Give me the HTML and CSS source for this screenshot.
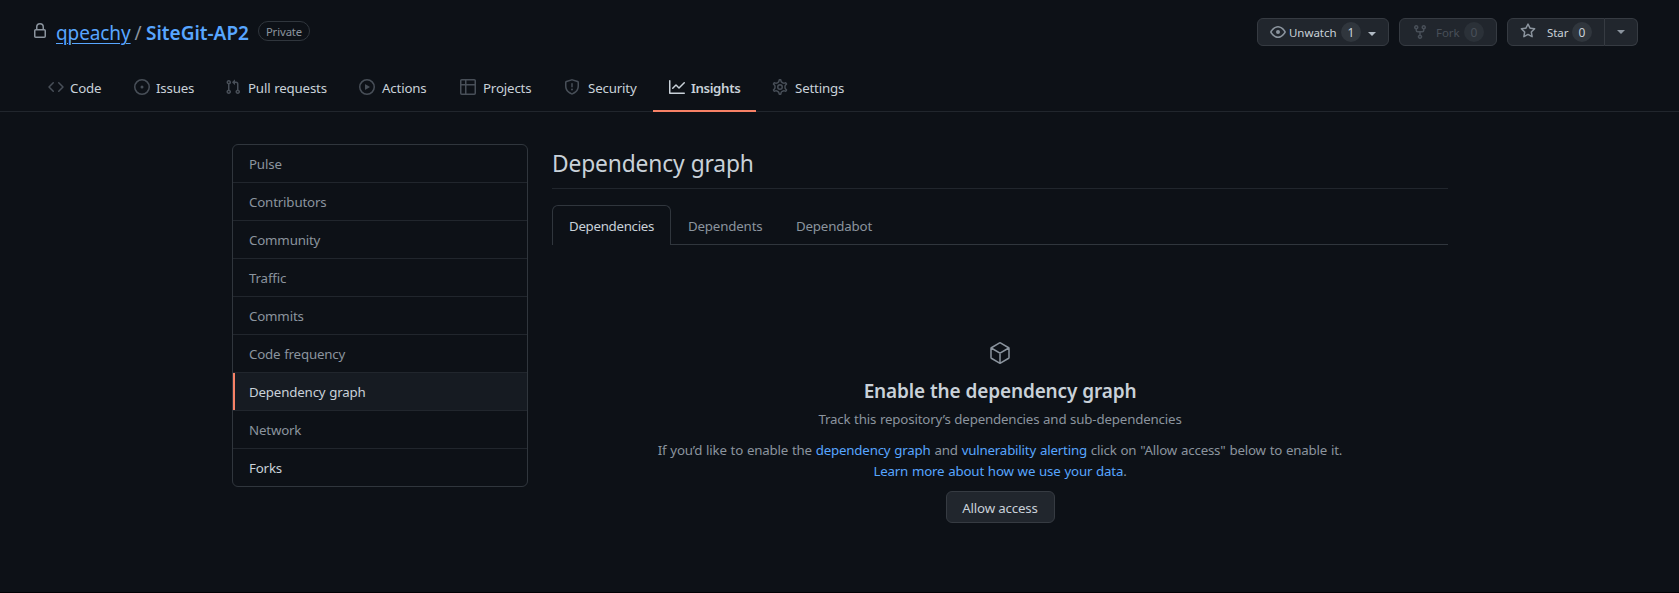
FILE: index.html
```html
<!DOCTYPE html>
<html lang="en">
<head>
<meta charset="utf-8">
<title>Dependency graph · qpeachy/SiteGit-AP2</title>
<link rel="stylesheet" href="styles.css">
</head>
<body>
<header class="repo-head">
  <div class="title-row">
    <svg class="icon lock" viewBox="0 0 16 16"><path fill-rule="evenodd" d="M4 4v2h-.25A1.75 1.75 0 002 7.75v5.5c0 .966.784 1.75 1.75 1.75h8.5A1.75 1.75 0 0014 13.25v-5.5A1.75 1.75 0 0012.25 6H12V4a4 4 0 10-8 0zm6.5 2V4a2.5 2.5 0 10-5 0v2h5zM12 7.5h.25a.25.25 0 01.25.25v5.5a.25.25 0 01-.25.25h-8.5a.25.25 0 01-.25-.25v-5.5a.25.25 0 01.25-.25H12z"/></svg>
    <h1 class="repo-name"><a class="owner" href="#">qpeachy</a><span class="slash">/</span><a class="repo" href="#">SiteGit-AP2</a></h1>
    <span class="label">Private</span>
    <div class="actions">
      <button class="btn-sm watch">
        <svg class="icon" viewBox="0 0 16 16"><path fill-rule="evenodd" d="M1.679 7.932c.412-.621 1.242-1.75 2.366-2.717C5.175 4.242 6.527 3.5 8 3.5c1.473 0 2.824.742 3.955 1.715 1.124.967 1.954 2.096 2.366 2.717a.119.119 0 010 .136c-.412.621-1.242 1.75-2.366 2.717C10.825 11.758 9.473 12.5 8 12.5c-1.473 0-2.824-.742-3.955-1.715C2.92 9.818 2.09 8.69 1.679 8.068a.119.119 0 010-.136zM8 2c-1.981 0-3.67.992-4.933 2.078C1.797 5.169.88 6.423.43 7.1a1.619 1.619 0 000 1.798c.45.678 1.367 1.932 2.637 3.024C4.329 13.008 6.019 14 8 14c1.981 0 3.67-.992 4.933-2.078 1.27-1.091 2.187-2.345 2.637-3.023a1.619 1.619 0 000-1.798c-.45-.678-1.367-1.932-2.637-3.023C11.671 2.992 9.981 2 8 2zm0 8a2 2 0 100-4 2 2 0 000 4z"/></svg>
        <span class="btn-text">Unwatch</span><span class="count">1</span><span class="caret"></span>
      </button>
      <button class="btn-sm fork" disabled>
        <svg class="icon" viewBox="0 0 16 16"><path fill-rule="evenodd" d="M5 3.25a.75.75 0 11-1.5 0 .75.75 0 011.5 0zm0 2.122a2.25 2.25 0 10-1.5 0v.878A2.25 2.25 0 005.75 8.5h1.5v2.128a2.251 2.251 0 101.5 0V8.5h1.5a2.25 2.25 0 002.25-2.25v-.878a2.25 2.25 0 10-1.5 0v.878a.75.75 0 01-.75.75h-4.5A.75.75 0 015 6.25v-.878zm3.75 7.378a.75.75 0 11-1.5 0 .75.75 0 011.5 0zm3-8.75a.75.75 0 100-1.5.75.75 0 000 1.5z"/></svg>
        <span class="btn-text">Fork</span><span class="count">0</span>
      </button>
      <div class="btn-group">
        <button class="btn-sm star">
          <svg class="icon" viewBox="0 0 16 16"><path fill-rule="evenodd" d="M8 .25a.75.75 0 01.673.418l1.882 3.815 4.21.612a.75.75 0 01.416 1.279l-3.046 2.97.719 4.192a.75.75 0 01-1.088.791L8 12.347l-3.766 1.98a.75.75 0 01-1.088-.79l.72-4.194L.818 6.374a.75.75 0 01.416-1.28l4.21-.611L7.327.668A.75.75 0 018 .25zm0 2.445L6.615 5.5a.75.75 0 01-.564.41l-3.097.45 2.24 2.184a.75.75 0 01.216.664l-.528 3.084 2.769-1.456a.75.75 0 01.698 0l2.77 1.456-.53-3.084a.75.75 0 01.216-.664l2.24-2.183-3.096-.45a.75.75 0 01-.564-.41L8 2.694z"/></svg>
          <span class="btn-text">Star</span><span class="count">0</span>
        </button>
        <button class="btn-sm more" aria-label="Lists"><span class="caret"></span></button>
      </div>
    </div>
  </div>
  <nav class="tabs">
    <a class="tab code" href="#"><svg class="icon" viewBox="0 0 16 16"><path fill-rule="evenodd" d="M4.72 3.22a.75.75 0 011.06 1.06L2.06 8l3.72 3.72a.75.75 0 11-1.06 1.06L.47 8.53a.75.75 0 010-1.06l4.25-4.25zm6.56 0a.75.75 0 10-1.06 1.06L13.94 8l-3.72 3.72a.75.75 0 101.06 1.06l4.25-4.25a.75.75 0 000-1.06l-4.25-4.25z"/></svg><span>Code</span></a>
    <a class="tab issues" href="#"><svg class="icon" viewBox="0 0 16 16"><circle class="line" cx="8" cy="8" r="7.25"/><circle cx="8" cy="8" r="1.5"/></svg><span>Issues</span></a>
    <a class="tab pulls" href="#"><svg class="icon" viewBox="0 0 16 16"><path fill-rule="evenodd" d="M7.177 3.073L9.573.677A.25.25 0 0110 .854v4.792a.25.25 0 01-.427.177L7.177 3.427a.25.25 0 010-.354zM3.75 2.5a.75.75 0 100 1.5.75.75 0 000-1.5zm-2.25.75a2.25 2.25 0 113 2.122v5.256a2.251 2.251 0 11-1.5 0V5.372A2.25 2.25 0 011.5 3.25zM11 2.5h-1V4h1a1 1 0 011 1v5.628a2.251 2.251 0 101.5 0V5A2.5 2.5 0 0011 2.5zm1 10.25a.75.75 0 111.5 0 .75.75 0 01-1.5 0zM3.75 12a.75.75 0 100 1.5.75.75 0 000-1.5z"/></svg><span>Pull requests</span></a>
    <a class="tab runs" href="#"><svg class="icon" viewBox="0 0 16 16"><path fill-rule="evenodd" d="M1.5 8a6.5 6.5 0 1113 0 6.5 6.5 0 01-13 0zM8 0a8 8 0 100 16A8 8 0 008 0zM6.379 5.227A.25.25 0 006 5.442v5.117a.25.25 0 00.379.214l4.264-2.559a.25.25 0 000-.428L6.379 5.227z"/></svg><span>Actions</span></a>
    <a class="tab projects" href="#"><svg class="icon" viewBox="0 0 16 16"><path fill-rule="evenodd" d="M0 1.75C0 .784.784 0 1.75 0h12.5C15.216 0 16 .784 16 1.75v12.5A1.75 1.75 0 0114.25 16H1.75A1.75 1.75 0 010 14.25V1.75zM1.5 6.5v7.75c0 .138.112.25.25.25H5v-8H1.5zM5 5H1.5V1.75a.25.25 0 01.25-.25H5V5zm1.5 1.5v8h7.75a.25.25 0 00.25-.25V6.5h-8zm8-1.5h-8V1.5h7.75a.25.25 0 01.25.25V5z"/></svg><span>Projects</span></a>
    <a class="tab security" href="#"><svg class="icon" viewBox="0 0 16 16"><path fill-rule="evenodd" d="M7.467.133a1.75 1.75 0 011.066 0l5.25 1.68A1.75 1.75 0 0115 3.48V7c0 1.566-.32 3.182-1.303 4.682-.983 1.498-2.585 2.813-5.032 3.855a1.7 1.7 0 01-1.33 0c-2.447-1.042-4.049-2.357-5.032-3.855C1.32 10.182 1 8.566 1 7V3.48a1.75 1.75 0 011.217-1.667l5.25-1.68zm.61 1.429a.25.25 0 00-.153 0l-5.25 1.68a.25.25 0 00-.174.238V7c0 1.358.275 2.666 1.057 3.86.784 1.194 2.121 2.34 4.366 3.297a.2.2 0 00.154 0c2.245-.956 3.582-2.104 4.366-3.298C13.225 9.666 13.5 8.36 13.5 7V3.48a.25.25 0 00-.174-.237l-5.25-1.68zM9 10.5a1 1 0 11-2 0 1 1 0 012 0zm-.25-5.75a.75.75 0 10-1.5 0v3a.75.75 0 001.5 0v-3z"/></svg><span>Security</span></a>
    <a class="tab insights selected" href="#"><svg class="icon" viewBox="0 0 16 16"><path fill-rule="evenodd" d="M1.5 1.75a.75.75 0 00-1.5 0v12.5c0 .414.336.75.75.75h14.5a.75.75 0 000-1.5H1.5V1.75zm14.28 2.53a.75.75 0 00-1.06-1.06L10 7.94 7.53 5.47a.75.75 0 00-1.06 0L3.22 8.72a.75.75 0 001.06 1.06L7 7.06l2.47 2.47a.75.75 0 001.06 0l5.25-5.25z"/></svg><span>Insights</span></a>
    <a class="tab settings" href="#"><svg class="icon" viewBox="0 0 16 16"><g class="line" transform="translate(8 8) scale(1.11) translate(-8 -8)"><path stroke-width="1.3" d="M7.429 1.525a6.593 6.593 0 011.142 0c.036.003.108.036.137.146l.289 1.105c.147.56.55.967.997 1.189.174.086.341.183.501.29.417.278.97.423 1.53.27l1.102-.303c.11-.03.175.016.195.046.219.31.41.641.573.989.014.031.022.11-.059.19l-.815.806c-.411.406-.562.957-.53 1.456a4.588 4.588 0 010 .582c-.032.499.119 1.05.53 1.456l.815.806c.08.08.073.159.059.19a6.494 6.494 0 01-.573.99c-.02.029-.086.074-.195.045l-1.103-.303c-.559-.153-1.112-.008-1.529.27-.16.107-.327.204-.5.29-.449.222-.851.628-.998 1.189l-.289 1.105c-.029.11-.101.143-.137.146a6.613 6.613 0 01-1.142 0c-.036-.003-.108-.037-.137-.146l-.289-1.105c-.147-.56-.55-.967-.997-1.189a4.502 4.502 0 01-.501-.29c-.417-.278-.97-.423-1.53-.27l-1.102.303c-.11.03-.175-.016-.195-.046a6.492 6.492 0 01-.573-.989c-.014-.031-.022-.11.059-.19l.815-.806c.411-.406.562-.957.53-1.456a4.587 4.587 0 010-.582c.032-.499-.119-1.05-.53-1.456l-.815-.806c-.08-.08-.073-.159-.059-.19a6.44 6.44 0 01.573-.99c.02-.029.086-.075.195-.045l1.103.303c.559.153 1.112.008 1.529-.27.16-.107.327-.204.5-.29.449-.222.851-.628.998-1.189l.289-1.105c.029-.11.101-.143.137-.146z"/></g><circle class="line" cx="8" cy="8" r="2.25"/></svg><span>Settings</span></a>
  </nav>
</header>

<div class="layout">
  <nav class="menu">
    <a href="#">Pulse</a>
    <a href="#">Contributors</a>
    <a href="#">Community</a>
    <a href="#">Traffic</a>
    <a href="#">Commits</a>
    <a href="#">Code frequency</a>
    <a href="#" class="current">Dependency graph</a>
    <a href="#">Network</a>
    <a href="#" class="bright">Forks</a>
  </nav>
  <main class="content">
    <h2 class="heading">Dependency graph</h2>
    <nav class="subtabs">
      <a class="subtab active" href="#">Dependencies</a>
      <a class="subtab" href="#">Dependents</a>
      <a class="subtab last" href="#">Dependabot</a>
    </nav>
    <section class="blank">
      <svg class="package" viewBox="0 0 24 24"><path d="M12.4 1.95l8.25 4.8a.75.75 0 01.35.65v9.2a.75.75 0 01-.35.65l-8.25 4.8a.8.8 0 01-.8 0l-8.25-4.8a.75.75 0 01-.35-.65V7.4a.75.75 0 01.35-.65l8.25-4.8a.8.8 0 01.8 0zM3.2 7l8.8 5.1L20.8 7M12 12.1V22"/></svg>
      <h3 class="blank-title">Enable the dependency graph</h3>
      <p class="track">Track this repository’s dependencies and sub-dependencies</p>
      <p class="explain"><span class="explain-line">If you’d like to enable the <a href="#">dependency graph</a> and <a href="#">vulnerability alerting</a> click on "Allow access" below to enable it.</span><br><span class="learn"><a href="#">Learn more about how we use your data</a>.</span></p>
      <button class="btn">Allow access</button>
    </section>
  </main>
</div>
</body>
</html>
```
FILE: styles.css
```css
* { box-sizing: border-box; }
body {
  margin: 0;
  height: 593px;
  background: #0d1117;
  color: #c9d1d9;
  font: 13.3px/21px "Noto Sans", "Open Sans", sans-serif;
  letter-spacing: -0.17px;
  word-spacing: 0.4px;
  border-bottom: 1px solid #010104;
}
a { color: #58a6ff; text-decoration: none; }
h1, h2, h3, p { margin: 0; }
button { font: inherit; letter-spacing: inherit; color: inherit; margin: 0; }
.icon { width: 16px; height: 16px; flex: none; fill: currentColor; }
.icon .line { fill: none; stroke: currentColor; stroke-width: 1.5; }

.repo-head { height: 112px; border-bottom: 1px solid #21262d; display: flex; flex-direction: column; justify-content: space-between; }
.title-row { display: flex; align-items: flex-start; padding: 18px 41px 0 32px; }
.lock { color: #8b949e; margin-top: 5px; }
.repo-name { display: flex; font-size: 19px; font-weight: 400; line-height: 30px; margin-left: 8px; letter-spacing: -0.1px; }
.owner { width: 74px; text-decoration: underline; text-underline-offset: 3px; text-decoration-thickness: 1px; white-space: nowrap; }
.slash { width: 16px; text-align: center; color: #8b949e; }
.repo { width: 104px; font-weight: 600; white-space: nowrap; letter-spacing: 0; }
.label { margin: 3px 0 0 8px; width: 52px; height: 20px; border: 1px solid #30363d; border-radius: 10px; font-size: 11.3px; line-height: 19px; text-align: center; color: #8b949e; letter-spacing: -0.1px; }

.actions { display: flex; gap: 10px; margin-left: auto; }
.btn-sm { display: flex; align-items: center; height: 28px; padding: 0 12px; background: #21262d; border: 1px solid #363b42; border-radius: 6px; font-size: 11.5px; line-height: 20px; color: #c9d1d9; letter-spacing: -0.05px; }
.btn-sm .icon { color: #8b949e; }
.btn-text { white-space: nowrap; padding-top: 1px; text-align: left; }
.count { width: 20px; height: 20px; border-radius: 10px; background: #30363d; text-align: center; line-height: 21px; font-size: 12px; }
.caret { border: 4px solid transparent; border-top-color: #b1bac4; border-bottom-width: 0; }
.watch { width: 132px; }
.watch .btn-text { width: 52px; padding-left: 3px; }
.watch .count { margin-left: 3px; }
.watch .caret { margin: 3px 0 0 7px; }
.fork { width: 98px; }
.fork .icon, .fork .btn-text { color: #484f58; }
.fork .btn-text { width: 28px; margin-left: 8px; }
.fork .count { color: #484f58; background: #2b3138; }
.btn-group { display: flex; }
.star { width: 98px; border-radius: 6px 0 0 6px; }
.star .icon { margin-top: -2px; }
.star .btn-text { width: 25px; margin-left: 11px; }
.more { width: 33px; margin-left: 0; border-left: 0; border-radius: 0 6px 6px 0; }
.more .caret { border-top-color: #8b949e; }

.tabs { display: flex; padding-left: 32px; height: 48px; margin-bottom: -1px; }
.tab { display: flex; gap: 7px; padding: 15px 0 0 16px; color: #c9d1d9; border-bottom: 2px solid transparent; white-space: nowrap; }
.tab .icon { color: #484f58; }
.tab span { line-height: 19px; }
.code, .issues, .selected { gap: 6px; }
.code { width: 86px; }
.issues { width: 91px; }
.pulls { width: 134px; }
.runs { width: 101px; }
.projects { width: 104px; }
.security { width: 105px; gap: 8px; }
.insights { width: 103px; }
.selected { font-weight: 600; border-bottom-color: #f78166; letter-spacing: -0.4px; }
.selected .icon { color: #c9d1d9; }

.layout { width: 1216px; margin: 32px auto 0 232px; display: flex; gap: 24px; align-items: flex-start; }
.menu { width: 296px; border: 1px solid #30363d; border-radius: 6px; overflow: hidden; }
.menu a { display: block; height: 38px; padding: 9px 16px 7px; border-bottom: 1px solid #21262d; color: #8b949e; }
.menu a:last-child { border-bottom: 0; height: 37px; }
.menu .current { background: #161b22; color: #c9d1d9; box-shadow: inset 2px 0 #f78166; }
.menu .bright { color: #c9d1d9; }

.content { flex: 1; }
.heading { height: 45px; padding-top: 1px; border-bottom: 1px solid #21262d; font-size: 22.8px; line-height: 38px; font-weight: 400; letter-spacing: -0.15px; }
.subtabs { display: flex; height: 40px; margin-top: 16px; border-bottom: 1px solid #30363d; }
.subtab { padding: 11px 0 0 17px; width: 108px; color: #8b949e; }
.active { width: 119px; height: 40px; padding: 10px 16px; color: #c9d1d9; background: #0d1117; border: 1px solid #30363d; border-bottom: 0; border-radius: 6px 6px 0 0; letter-spacing: -0.3px; }

.blank { display: flex; flex-direction: column; align-items: center; padding-top: 96px; text-align: center; }
.package { width: 24px; height: 24px; fill: none; stroke: #8b949e; stroke-width: 1.5; }
.blank-title { margin-top: 11px; font-size: 19px; line-height: 30px; font-weight: 600; white-space: nowrap; }
.track { margin-top: 3px; color: #8b949e; white-space: nowrap; }
.explain { margin-top: 10px; color: #8b949e; white-space: nowrap; letter-spacing: -0.19px; word-spacing: 0.6px; }
.btn { margin-top: 9px; width: 109px; height: 32px; padding: 2px 0 0; border: 1px solid #363b42; border-radius: 6px; background: #21262d; white-space: nowrap; }
```
